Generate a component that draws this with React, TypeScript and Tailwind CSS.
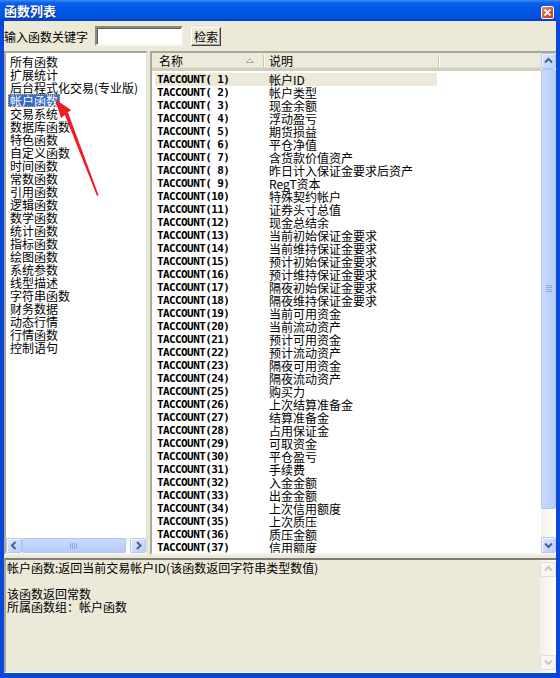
import React from "react";

const groups = [
  "所有函数",
  "扩展统计",
  "后台程式化交易(专业版)",
  "帐户函数",
  "交易系统",
  "数据库函数",
  "特色函数",
  "自定义函数",
  "时间函数",
  "常数函数",
  "引用函数",
  "逻辑函数",
  "数学函数",
  "统计函数",
  "指标函数",
  "绘图函数",
  "系统参数",
  "线型描述",
  "字符串函数",
  "财务数据",
  "动态行情",
  "行情函数",
  "控制语句",
];

const descs = [
  "帐户ID",
  "帐户类型",
  "现金余额",
  "浮动盈亏",
  "期货损益",
  "平仓净值",
  "含货款价值资产",
  "昨日计入保证金要求后资产",
  "RegT资本",
  "特殊契约帐户",
  "证券头寸总值",
  "现金总结余",
  "当前初始保证金要求",
  "当前维持保证金要求",
  "预计初始保证金要求",
  "预计维持保证金要求",
  "隔夜初始保证金要求",
  "隔夜维持保证金要求",
  "当前可用资金",
  "当前流动资产",
  "预计可用资金",
  "预计流动资产",
  "隔夜可用资金",
  "隔夜流动资产",
  "购买力",
  "上次结算准备金",
  "结算准备金",
  "占用保证金",
  "可取资金",
  "平仓盈亏",
  "手续费",
  "入金金额",
  "出金金额",
  "上次信用额度",
  "上次质压",
  "质压金额",
  "信用额度",
  "动态权益",
];

function Chevron({ dir, color = "#4D6185" }: { dir: "up" | "down" | "left" | "right"; color?: string }) {
  const pts = {
    up: "1,5.5 4.5,2 8,5.5",
    down: "1,2.5 4.5,6 8,2.5",
    left: "5.5,1 2,4.5 5.5,8",
    right: "3,1 6.5,4.5 3,8",
  }[dir];
  return (
    <svg width="9" height="9" viewBox="0 0 9 9">
      <polyline points={pts} fill="none" stroke={color} strokeWidth="2" />
    </svg>
  );
}

function ScrollBtn({ dir, className = "" }: { dir: "up" | "down" | "left" | "right"; className?: string }) {
  return (
    <div
      className={`flex items-center justify-center rounded-[2px] border border-[#B4C8F6] bg-[linear-gradient(135deg,#DCE6FE,#B9CEFB)] shadow-[inset_1px_1px_0_#F2F6FF] ${className}`}
    >
      <Chevron dir={dir} />
    </div>
  );
}

export default function App() {
  return (
    <div className="relative flex h-[678px] w-[560px] flex-col overflow-hidden bg-[#0A48D8] font-['Noto_Sans_CJK_SC',sans-serif] text-[12px] leading-[13px] text-black">
      {/* title bar */}
      <div className="flex h-[21px] shrink-0 items-start justify-between bg-[linear-gradient(180deg,#3A8DF9_0%,#0A5EEA_14%,#0056E6_55%,#0050DE_85%,#003FC4_100%)] pl-[4px] pr-[6px]">
        <span className="mt-[4px] text-[13px] font-bold leading-[14px] text-white [text-shadow:1px_1px_0_#0B2A8E]">
          函数列表
        </span>
        <div className="mt-[6px] flex h-[13px] w-[13px] items-center justify-center rounded-[2px] border border-white bg-[linear-gradient(135deg,#E98A6C,#D4532C_60%,#C2421C)]">
          <svg width="7" height="7" viewBox="0 0 7 7">
            <path d="M0.5 0.5 L6.5 6.5 M6.5 0.5 L0.5 6.5" stroke="white" strokeWidth="1.8" />
          </svg>
        </div>
      </div>

      <div className="mx-[4px] mb-[5px] flex flex-1 flex-col bg-[#ECE9D8]">
        {/* toolbar */}
        <div className="flex h-[30px] shrink-0 items-center">
          <span>输入函数关键字</span>
          <div className="ml-[7px] h-[20px] w-[88px] border-2 border-b-[#F6F5EF] border-l-[#8D8B7E] border-r-[#F6F5EF] border-t-[#8D8B7E] bg-white shadow-[inset_1px_1px_0_#5E5C52]" />
          <div className="ml-[8px] flex h-[19px] w-[30px] items-center justify-center border border-b-[#3F3F3F] border-l-white border-r-[#3F3F3F] border-t-white bg-[#ECE9D8] shadow-[inset_-1px_-1px_0_#ACA899]">
            检索
          </div>
        </div>

        {/* panes */}
        <div className="flex h-[504px] shrink-0 gap-[2px]">
          {/* left list */}
          <div className="flex w-[144px] flex-col border-2 border-b-[#F4F3EE] border-l-[#A9A799] border-r-[#E4E2D6] border-t-[#A9A799] bg-white">
            <div className="flex flex-1 flex-col items-start overflow-hidden pt-[2px]">
              {groups.map((g, i) => (
                <div
                  key={g}
                  className={
                    i === 3
                      ? "ml-[2px] h-[13px] whitespace-nowrap bg-[#316AC5] px-[2px] text-white outline-1 outline-dotted outline-[#E0B060] -outline-offset-1"
                      : "ml-[2px] h-[13px] whitespace-nowrap px-[2px]"
                  }
                >
                  {g}
                </div>
              ))}
            </div>
            <div className="flex h-[15px] shrink-0 bg-[linear-gradient(180deg,#F3F1EC,#FEFEFB)]">
              <ScrollBtn dir="left" className="w-[16px]" />
              <div className="flex w-[104px] items-center justify-center rounded-[2px] border border-[#B1C6F5] bg-[linear-gradient(180deg,#CBDAFE,#B6CBFA)]">
                <svg width="8" height="6" viewBox="0 0 8 6">
                  <path d="M0.5 0 V6 M2.5 0 V6 M4.5 0 V6 M6.5 0 V6" stroke="#8CA8E8" strokeWidth="1" />
                </svg>
              </div>
              <div className="flex-1" />
              <ScrollBtn dir="right" className="w-[16px]" />
            </div>
          </div>

          {/* right list */}
          <div className="flex flex-1 border-b-2 border-l-2 border-t-2 border-b-[#F4F3EE] border-l-[#A9A799] border-t-[#A9A799] bg-white">
            <div className="flex flex-1 flex-col overflow-hidden">
              <div className="flex h-[18px] shrink-0 items-center border-b-[3px] border-[#D2CEBE] bg-[#EBEADB] shadow-[inset_0_-1px_0_#E2DECD]">
                <div className="flex h-full w-[111px] items-center justify-between pl-[7px] pr-[9px]">
                  <span>名称</span>
                  <svg width="8" height="5" viewBox="0 0 8 5">
                    <polygon points="0.5,4.5 4,0.5 7.5,4.5" fill="none" stroke="#ACA899" strokeWidth="1" />
                  </svg>
                </div>
                <div className="h-[12px] w-[2px] border-l border-r border-l-[#C7C5B2] border-r-white" />
                <div className="flex h-full w-[173px] items-center pl-[4px]">说明</div>
                <div className="h-[12px] w-[2px] border-l border-r border-l-[#C7C5B2] border-r-white" />
                <div className="flex-1" />
              </div>
              <div className="flex flex-1 flex-col overflow-hidden pt-[2px]">
                {descs.map((d, i) => {
                  const n = i + 1;
                  const name = n < 10 ? `TACCOUNT( ${n})` : `TACCOUNT(${n})`;
                  return (
                    <div
                      key={n}
                      className={
                        n === 1
                          ? "ml-[3px] flex h-[13px] w-[282px] shrink-0 items-center bg-[#ECE9D8]"
                          : "ml-[3px] flex h-[13px] w-[282px] shrink-0 items-center"
                      }
                    >
                      <span className="w-[108px] whitespace-pre pl-[2px] font-['DejaVu_Sans_Mono',monospace] text-[11px] font-bold tracking-[-0.6px]">
                        {name}
                      </span>
                      <span className="whitespace-nowrap pl-[6px]">{d}</span>
                    </div>
                  );
                })}
              </div>
            </div>
            {/* vertical scrollbar */}
            <div className="flex w-[15px] shrink-0 flex-col bg-[linear-gradient(90deg,#F3F1EC,#FEFEFB)]">
              <ScrollBtn dir="up" className="h-[16px] shrink-0" />
              <div className="flex h-[440px] shrink-0 items-center justify-center rounded-[2px] border border-[#B1C6F5] bg-[linear-gradient(90deg,#CBDAFE,#B6CBFA)]">
                <svg width="6" height="8" viewBox="0 0 6 8">
                  <path d="M0 0.5 H6 M0 2.5 H6 M0 4.5 H6 M0 6.5 H6" stroke="#8CA8E8" strokeWidth="1" />
                </svg>
              </div>
              <div className="flex-1" />
              <ScrollBtn dir="down" className="h-[16px] shrink-0" />
            </div>
          </div>
        </div>

        {/* description pane */}
        <div className="mt-[3px] flex flex-1 border-b border-l-2 border-t-2 border-b-white border-l-[#A9A799] border-t-[#7F7D72]">
          <div className="flex-1 pl-[1px] pt-[1px]">
            <div className="h-[13px] whitespace-nowrap">帐户函数:返回当前交易帐户ID(该函数返回字符串类型数值)</div>
            <div className="h-[13px]" />
            <div className="h-[13px]">该函数返回常数</div>
            <div className="h-[13px]">所属函数组：帐户函数</div>
          </div>
          <div className="flex w-[16px] shrink-0 flex-col justify-between bg-[linear-gradient(90deg,#F1F0EA,#FDFDFB)] py-[2px]">
            <div className="flex h-[15px] items-center justify-center rounded-[2px] border border-[#E3E1D6] bg-[#F7F6F1]">
              <Chevron dir="up" color="#C9C7BA" />
            </div>
            <div className="flex h-[15px] items-center justify-center rounded-[2px] border border-[#E3E1D6] bg-[#F7F6F1]">
              <Chevron dir="down" color="#C9C7BA" />
            </div>
          </div>
        </div>
      </div>

      {/* red annotation arrow */}
      <svg className="pointer-events-none absolute left-0 top-0" width="560" height="678" viewBox="0 0 560 678">
        <polygon points="55,99 61,118 71,110" fill="#EE1C25" />
        <polygon points="64.5,114 68,112.5 98.5,195 97,196" fill="#EE1C25" />
      </svg>
    </div>
  );
}
